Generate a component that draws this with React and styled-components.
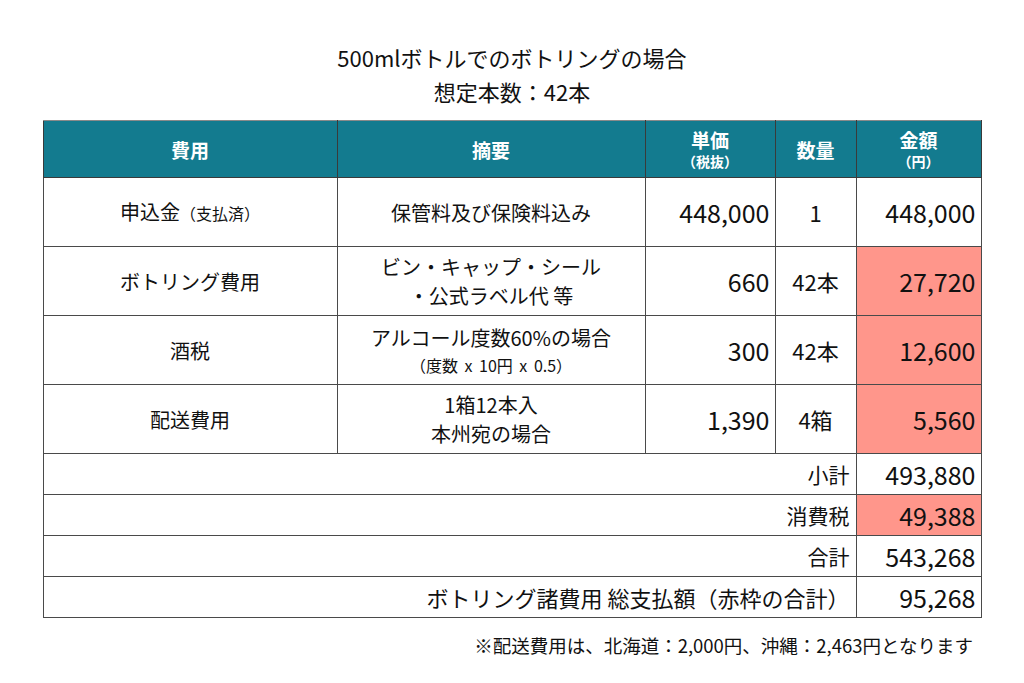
import React from 'react';
import styled, { createGlobalStyle } from 'styled-components';

const GlobalStyle = createGlobalStyle`
  html, body {
    margin: 0;
    padding: 0;
    background: #ffffff;
  }
  body {
    font-family: "Noto Sans CJK JP", "Noto Sans", sans-serif;
    color: #111;
  }
`;

const Page = styled.div`
  width: 1024px;
  padding-top: 40px;
  display: flex;
  flex-direction: column;
  align-items: center;
`;

const Title = styled.h1`
  margin: 0 0 12px;
  font-size: 22px;
  font-weight: 400;
  line-height: 34px;
  text-align: center;
`;

const Table = styled.table`
  width: 938px;
  border-collapse: collapse;
  table-layout: fixed;
`;

const HeadCell = styled.th`
  height: 56px;
  padding: 0;
  background: #137b8f;
  color: #fff;
  font-size: 19px;
  font-weight: 700;
  line-height: 23px;
  text-align: center;
  border: 1px solid #3a3a3a;
  border-top-color: #8a8a8a;
`;

const HeadSub = styled.span`
  display: block;
  font-size: 14px;
  line-height: 20px;
`;

const Row = styled.tr`
  height: ${p => (p.tall ? '69px' : '41px')};
`;

const Cell = styled.td`
  padding: ${p => (p.align === 'right' ? '0 5px 0 4px' : '0 4px')};
  text-align: ${p => p.align || 'center'};
  font-size: ${p => (p.num ? '25px' : '20px')};
  line-height: ${p => (p.num ? '30px' : '29px')};
  background: ${p => (p.pink ? '#ff968b' : '#fff')};
  border: 1px solid #4a4a4a;
  vertical-align: middle;
`;

const Qty = styled(Cell)`
  font-size: 22px;
`;

const SumLabel = styled(Cell)`
  font-size: 21px;
  padding-right: 6px;
`;

const WideLabel = styled(SumLabel)`
  font-size: 22px;
`;

const Small = styled.span`
  font-size: 16px;
`;

const SmallLine = styled.span`
  display: block;
  font-size: 16px;
  line-height: 26px;
  word-spacing: 3px;
`;

const Note = styled.p`
  width: 938px;
  margin: 13px 0 0;
  padding-right: 8px;
  box-sizing: border-box;
  text-align: right;
  font-size: 18.5px;
  line-height: 28px;
`;

const items = [
  {
    name: <>申込金<Small>（支払済）</Small></>,
    desc: '保管料及び保険料込み',
    price: '448,000',
    qty: '1',
    amount: '448,000',
    pink: false,
  },
  {
    name: 'ボトリング費用',
    desc: <>ビン・キャップ・シール<br />・公式ラベル代 等</>,
    price: '660',
    qty: '42本',
    amount: '27,720',
    pink: true,
  },
  {
    name: '酒税',
    desc: <>アルコール度数60%の場合<SmallLine>（度数 x 10円 x 0.5）</SmallLine></>,
    price: '300',
    qty: '42本',
    amount: '12,600',
    pink: true,
  },
  {
    name: '配送費用',
    desc: <>1箱12本入<br />本州宛の場合</>,
    price: '1,390',
    qty: '4箱',
    amount: '5,560',
    pink: true,
  },
];

const totals = [
  { label: '小計', value: '493,880', pink: false },
  { label: '消費税', value: '49,388', pink: true },
  { label: '合計', value: '543,268', pink: false },
  { label: 'ボトリング諸費用 総支払額（赤枠の合計）', value: '95,268', pink: false, wide: true },
];

export default function App() {
  return (
    <>
      <GlobalStyle />
      <Page>
        <Title>
          500mlボトルでのボトリングの場合<br />想定本数：42本
        </Title>
        <Table>
          <colgroup>
            <col style={{ width: 294 }} />
            <col style={{ width: 308 }} />
            <col style={{ width: 130 }} />
            <col style={{ width: 81 }} />
            <col style={{ width: 125 }} />
          </colgroup>
          <thead>
            <tr>
              <HeadCell>費用</HeadCell>
              <HeadCell>摘要</HeadCell>
              <HeadCell>単価<HeadSub>（税抜）</HeadSub></HeadCell>
              <HeadCell>数量</HeadCell>
              <HeadCell>金額<HeadSub>（円）</HeadSub></HeadCell>
            </tr>
          </thead>
          <tbody>
            {items.map((it, i) => (
              <Row tall key={i}>
                <Cell>{it.name}</Cell>
                <Cell>{it.desc}</Cell>
                <Cell num align="right">{it.price}</Cell>
                <Qty>{it.qty}</Qty>
                <Cell num align="right" pink={it.pink}>{it.amount}</Cell>
              </Row>
            ))}
            {totals.map((t, i) => {
              const Label = t.wide ? WideLabel : SumLabel;
              return (
                <Row key={i}>
                  <Label colSpan={4} align="right">{t.label}</Label>
                  <Cell num align="right" pink={t.pink}>{t.value}</Cell>
                </Row>
              );
            })}
          </tbody>
        </Table>
        <Note>※配送費用は、北海道：2,000円、沖縄：2,463円となります</Note>
      </Page>
    </>
  );
}
